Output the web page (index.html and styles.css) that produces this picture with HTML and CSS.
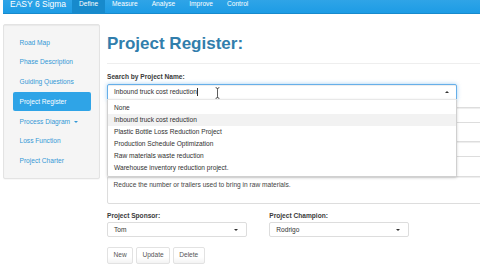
FILE: index.html
```html
<!DOCTYPE html>
<html>
<head>
<meta charset="utf-8">
<title>EASY 6 Sigma - Project Register</title>
<link rel="stylesheet" href="styles.css">
</head>
<body>
<nav class="navbar">
  <span class="brand">EASY 6 Sigma</span>
  <ul class="nav">
    <li class="nav-item active">Define</li>
    <li class="nav-item">Measure</li>
    <li class="nav-item">Analyse</li>
    <li class="nav-item">Improve</li>
    <li class="nav-item">Control</li>
  </ul>
</nav>
<div class="container">
  <aside class="well">
    <ul class="pills">
      <li class="pill">Road Map</li>
      <li class="pill">Phase Description</li>
      <li class="pill">Guiding Questions</li>
      <li class="pill active">Project Register</li>
      <li class="pill">Process Diagram <span class="caret"></span></li>
      <li class="pill">Loss Function</li>
      <li class="pill">Project Charter</li>
    </ul>
  </aside>
  <main class="main">
    <h1 class="title">Project Register:</h1>
    <hr class="rule">
    <div class="group">
      <label class="label">Search by Project Name:</label>
      <div class="selectize">
        <span class="value">Inbound truck cost reduction</span><span class="text-caret"></span>
        <span class="arrow-up"></span>
        <svg class="ibeam" width="5" height="12" viewBox="0 0 5 12"><path d="M0.6 0.6 Q2.5 0.6 2.5 2.2 Q2.5 0.6 4.4 0.6 M2.5 2.2 V9.8 M0.6 11.4 Q2.5 11.4 2.5 9.8 Q2.5 11.4 4.4 11.4" fill="none" stroke="#333" stroke-width="0.8"/></svg>
        <ul class="dropdown">
          <li class="option">None</li>
          <li class="option active">Inbound truck cost reduction</li>
          <li class="option">Plastic Bottle Loss Reduction Project</li>
          <li class="option">Production Schedule Optimization</li>
          <li class="option">Raw materials waste reduction</li>
          <li class="option">Warehouse inventory reduction project.</li>
        </ul>
      </div>
    </div>
    <div class="group">
      <div class="input"></div>
    </div>
    <div class="group">
      <div class="label-space"></div>
      <div class="input"></div>
    </div>
    <div class="group">
      <div class="label-space"></div>
      <div class="textarea">Reduce the number or trailers used to bring in raw materials.</div>
    </div>
    <div class="row2">
      <div class="group">
        <label class="label">Project Sponsor:</label>
        <div class="select">Tom<span class="arrow-down"></span></div>
      </div>
      <div class="group">
        <label class="label">Project Champion:</label>
        <div class="select">Rodrigo<span class="arrow-down"></span></div>
      </div>
    </div>
    <div class="buttons">
      <button class="btn">New</button>
      <button class="btn">Update</button>
      <button class="btn">Delete</button>
    </div>
  </main>
</div>
</body>
</html>
```
FILE: styles.css
```css
* { box-sizing: border-box; }
html, body { margin: 0; padding: 0; }
body {
  width: 480px;
  height: 270px;
  overflow: hidden;
  padding-left: 3px;
  background: #fff;
  font-family: "Liberation Sans", Arial, sans-serif;
  font-size: 6.6px;
  line-height: 9.4px;
  color: #555;
}
ul { list-style: none; margin: 0; padding: 0; }

/* navbar */
.navbar {
  display: flex;
  height: 14px;
  background: linear-gradient(#2fa4e7, #1d9ce5);
  border-bottom: 1px solid #178acc;
}
.brand {
  width: 69px;
  padding-left: 7px;
  font-size: 8.5px;
  line-height: 8px;
  color: #fff;
  white-space: nowrap;
}
.nav { display: flex; }
.nav-item {
  height: 13px;
  padding: 0 7px;
  line-height: 7px;
  color: #fff;
}
.nav-item.active { background: #178acc; }

/* layout */
.container {
  display: flex;
  align-items: flex-start;
  margin-top: 10px;
}
.well {
  flex: none;
  width: 97px;
  padding: 8px 8px 8px 8.5px;
  background: #f5f5f5;
  border: 1px solid #e3e3e3;
  border-radius: 2px;
  box-shadow: inset 0 1px 1px rgba(0,0,0,0.05), 0 1px 1px rgba(0,0,0,0.03);
}
.pill {
  padding: 4.7px 7px;
  border-radius: 2px;
  color: #3498d6;
  white-space: nowrap;
}
.pill + .pill { margin-top: 0.94px; }
.pill.active { background: #2fa4e7; color: #fff; }
.caret {
  display: inline-block;
  width: 0; height: 0;
  margin-left: 2px;
  vertical-align: middle;
  border-top: 2px solid #3498d6;
  border-left: 2px solid transparent;
  border-right: 2px solid transparent;
}

.main {
  flex: none;
  width: 420px;
  margin-left: 7px;
}
.title {
  margin: 11px 0 0;
  font-size: 17px;
  line-height: 18.7px;
  font-weight: bold;
  color: #317eac;
}
.rule {
  margin: 9.4px 0 8.4px;
  border: 0;
  border-top: 1px solid #eee;
  height: 0;
}
.group { margin-bottom: 7px; }
.label {
  display: block;
  margin-bottom: 2.35px;
  font-weight: bold;
  color: #3a3a3a;
  white-space: nowrap;
}
.label-space {
  height: 9.4px;
  margin-bottom: 2.35px;
}

/* search selectize */
.selectize {
  position: relative;
  width: 350px;
  height: 15.5px;
  padding-left: 6px;
  border: 1px solid #66afe9;
  border-radius: 2px 2px 0 0;
  box-shadow: inset 0 1px 1px rgba(0,0,0,0.075), 0 0 4px rgba(102,175,233,0.6);
  background: #fff;
  line-height: 13.5px;
  color: #303030;
}
.text-caret {
  display: inline-block;
  width: 0.6px;
  height: 8px;
  margin-left: 0.5px;
  vertical-align: -1.5px;
  background: #303030;
}
.arrow-up {
  position: absolute;
  right: 7.5px;
  top: 5.5px;
  width: 0; height: 0;
  border-bottom: 2.5px solid #333;
  border-left: 2.5px solid transparent;
  border-right: 2.5px solid transparent;
}
.ibeam {
  position: absolute;
  left: 107px;
  top: 1.5px;
}
.dropdown {
  position: absolute;
  z-index: 10;
  left: -1px;
  top: calc(100% + 0.7px);
  width: 350px;
  padding: 1.3px 0 2px;
  background: #fff;
  border: 1px solid #d0d0d0;
  border-top-color: #e8e8e8;
  border-radius: 0 0 2px 2px;
  box-shadow: 0 1px 3px rgba(0,0,0,0.18);
}
.option {
  height: 12px;
  padding-left: 6px;
  line-height: 12px;
  color: #303030;
}
.option.active { background: #f2f2f2; }

/* form fields */
.input {
  height: 16px;
  border: 1px solid #ddd;
  border-radius: 2px;
  box-shadow: inset 0 1px 1px rgba(0,0,0,0.075);
  background: #fff;
}
.textarea {
  height: 27.5px;
  padding: 2.8px 5.6px;
  border: 1px solid #ddd;
  border-radius: 2px;
  box-shadow: inset 0 1px 1px rgba(0,0,0,0.075);
  background: #fff;
  color: #444;
}
.row2 {
  display: grid;
  grid-template-columns: 162.3px 162.3px;
}
.select {
  position: relative;
  width: 140px;
  height: 15px;
  padding-left: 6px;
  border: 1px solid #ddd;
  border-radius: 2px;
  background: #fff;
  line-height: 13px;
  color: #333;
}
.arrow-down {
  position: absolute;
  right: 8.5px;
  top: 5.5px;
  width: 0; height: 0;
  border-top: 2.5px solid #333;
  border-left: 2.5px solid transparent;
  border-right: 2.5px solid transparent;
}

/* buttons */
.buttons {
  display: flex;
  gap: 2.4px;
  margin-top: 2.5px;
}
.btn {
  height: 16.6px;
  padding: 0 5.6px;
  margin: 0;
  border: 1px solid #e2e2e2;
  border-radius: 2px;
  background: linear-gradient(#fff, #fff 60%, #f3f3f3);
  font-family: inherit;
  font-size: 6.6px;
  line-height: 14px;
  color: #555;
}
```
